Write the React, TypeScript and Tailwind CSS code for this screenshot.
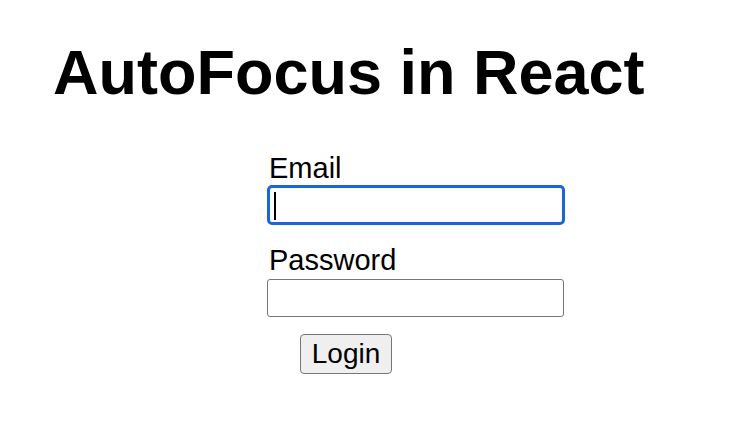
import React from "react";

const App = () => {
  return (
    <div className="w-[730px] h-[434px] bg-white font-['Liberation_Sans',Arial,sans-serif] text-black">
      <h1 className="pl-[53px] pt-[41px] text-[63px] font-bold leading-none">
        AutoFocus in React
      </h1>
      <form className="flex flex-col ml-[267px] mt-[50px] w-[298px]">
        <label className="text-[29px] leading-none pl-[2px]">Email</label>
        <div className="relative mt-[2px]">
          <input
            type="email"
            className="w-[298px] h-10 border-[3px] border-[#1a66d2] rounded-[5px] outline-none caret-transparent bg-white"
          />
          <span className="absolute left-[7px] top-[7px] w-[2px] h-[28px] bg-black" />
        </div>
        <label className="text-[29px] leading-none pl-[2px] mt-[21px]">Password</label>
        <input
          type="password"
          className="mt-[4px] w-[297px] h-[38px] border border-[#767676] rounded-[3px] outline-none bg-white"
        />
        <button
          type="button"
          className="self-start ml-[33px] mt-[17px] w-[92px] h-10 border border-[#767676] rounded-[4px] bg-[#efefef] text-[28px] leading-none"
        >
          Login
        </button>
      </form>
    </div>
  );
};

export default App;
